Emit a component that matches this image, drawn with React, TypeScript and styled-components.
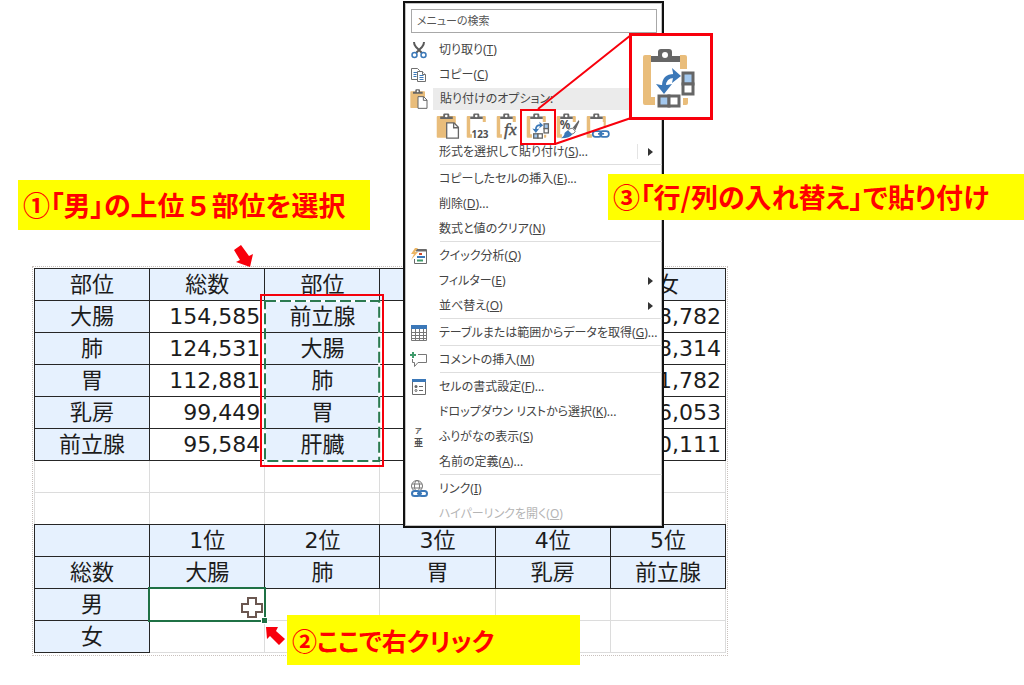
import React from "react";
import styled, { createGlobalStyle, css } from "styled-components";

const GlobalStyle = createGlobalStyle`
  *, *::before, *::after { box-sizing: border-box; }
  body {
    margin: 0;
    background: #ffffff;
    color: #1c1c1c;
    font-family: "Noto Sans", "Noto Sans CJK JP", sans-serif;
  }
`;

const Stage = styled.main`
  position: relative;
  min-height: 100vh;
  padding: 266px 16px 24px 32px;
  overflow: hidden;
`;

/* ---------- worksheet ---------- */

const Sheet = styled.section`
  max-width: 696px;
  padding: 1px 1px 2px;
  border: 1px dotted #c9c1bd;
`;

const Grid = styled.table`
  width: 100%;
  table-layout: fixed;
  border-collapse: collapse;
  font-family: "DejaVu Sans", "Noto Sans CJK JP", sans-serif;
  font-size: 22px;
  line-height: 31px;
`;

type Kind = "label" | "value" | "blank";

/* A 1px double border paints as solid and wins over the pale gridlines it meets. */
const Cell = styled.td<{ $kind: Kind }>`
  position: relative;
  height: 32px;
  padding: 0 4px;
  text-align: center;
  font-weight: 400;
  white-space: nowrap;
  border: 1px solid #dcdcdc;
  ${(p) => p.$kind !== "blank" && css`border: 1px double #262626;`}
  ${(p) => p.$kind === "label" && css`background: #e6f1fe;`}
  ${(p) => p.$kind === "value" && css`text-align: right;`}
`;

const CopiedRange = styled.div`
  position: absolute;
  z-index: 1;
  top: -7px;
  left: -5px;
  width: calc(100% + 10px);
  height: 173px;
  border: 2px solid #f5000c;
  pointer-events: none;

  svg {
    position: absolute;
    top: 4px;
    left: 2px;
    width: calc(100% - 4px);
    height: calc(100% - 6px);
    overflow: visible;
  }
  rect {
    width: calc(100% - 2px);
    height: calc(100% - 3px);
    fill: none;
    stroke-width: 2px;
  }
`;

const ActiveCell = styled.div`
  position: absolute;
  z-index: 1;
  inset: -2px;
  border: 2px solid #1f7145;

  &::after {
    content: "";
    position: absolute;
    right: -3px;
    bottom: -3px;
    width: 5px;
    height: 5px;
    background: #1f7145;
    outline: 1px solid #ffffff;
  }

  svg {
    position: absolute;
    right: 0;
    top: 6px;
  }
`;

/* ---------- context menu ---------- */

const Menu = styled.nav`
  position: absolute;
  z-index: 2;
  top: 1px;
  left: 403px;
  width: 261px;
  display: flex;
  flex-direction: column;
  background: #ffffff;
  border: 2px solid #111111;
  box-shadow: inset 0 0 0 1px #c4c4c4;
  font-size: 12px;
  font-feature-settings: "palt";
  color: #444444;
`;

const Search = styled.input`
  height: 24px;
  margin: 6px 5px 4px 6px;
  padding: 0 5px 2px;
  border: 1px solid #a8a8a8;
  background: #ffffff;
  font: inherit;
  font-size: 11px;
  font-feature-settings: inherit;
  color: #555555;
  &::placeholder { color: #555555; opacity: 1; }
`;

const Row = styled.button`
  display: grid;
  grid-template-columns: 26px 1fr 24px;
  align-items: center;
  height: 25px;
  padding: 0 0 0 4px;
  border: 0;
  background: none;
  font: inherit;
  font-feature-settings: inherit;
  color: inherit;
  text-align: left;
  white-space: nowrap;

  &:disabled { color: #b5b5b5; }
  > svg { width: 20px; height: 20px; }
`;

const RowLabel = styled.span<{ $split?: boolean }>`
  grid-column: 2;
  padding-left: 4px;
  line-height: 21px;
  ${(p) => p.$split && css`border-right: 1px solid #e4e4e4; line-height: 15px;`}
`;

const Heading = styled.div`
  display: grid;
  grid-template-columns: 24px 1fr;
  align-items: center;
  height: 25px;
  padding: 0 3px 2px 4px;
  > svg { width: 20px; height: 20px; }
`;

const HeadingLabel = styled.h2`
  margin: 0;
  padding-left: 7px;
  background: #ebebeb;
  font-size: 12px;
  font-weight: 400;
  line-height: 22px;
`;

const SubmenuMark = styled.span`
  justify-self: center;
  border: 4px solid transparent;
  border-left: 5px solid #333333;
  border-right: 0;
`;

const Rule = styled.hr`
  width: 222px;
  height: 2px;
  margin: 0 0 0 auto;
  border: 0;
  border-top: 1px solid #dedede;
`;

const PasteOptions = styled.div`
  display: flex;
  gap: 6px;
  height: 27px;
  padding-left: 31px;
  align-items: center;
`;

const PasteButton = styled.button`
  width: 24px;
  height: 26px;
  padding: 0;
  border: 0;
  background: none;
  svg { display: block; width: 24px; height: 26px; }
`;

/* ---------- annotations ---------- */

const Callout = styled.p<{ $x: number; $y: number; $w?: number; $h: number; $compact?: boolean }>`
  position: absolute;
  z-index: 4;
  left: ${(p) => p.$x}px;
  top: ${(p) => p.$y}px;
  ${(p) => (p.$w ? `width: ${p.$w}px;` : "right: 0;")}
  margin: 0;
  padding-left: 5px;
  background: #ffff00;
  color: #ff0000;
  font-family: "Noto Sans CJK JP", sans-serif;
  font-size: ${(p) => (p.$compact ? 25 : 27)}px;
  font-weight: 700;
  line-height: ${(p) => p.$h}px;
  font-feature-settings: "palt";
  white-space: nowrap;
`;

const FullWidth = styled.span`
  font-feature-settings: normal;
`;

const Marks = styled.svg`
  position: absolute;
  z-index: 3;
  top: 0;
  left: 0;
  pointer-events: none;
`;

const Magnifier = styled.figure`
  position: absolute;
  z-index: 4;
  top: 33px;
  left: 629px;
  width: 84px;
  height: 87px;
  margin: 0;
  padding: 12px 0 0 10px;
  border: 3px solid #f8000c;
  background: #ffffff;
  svg { display: block; width: 54px; height: 60px; }
`;

/* ---------- drawings ---------- */

const ORANGE = "#e9bd7b";
const GREY = "#666666";
const BLUE = "#3b78b8";

const Drawing = styled.svg`
  overflow: visible;
`;

const Clip = () => (
  <>
    <path d="M9 14V8h7V4q0-3 3-3h8q3 0 3 3v4h8v6z" fill={GREY} />
    <circle cx="23" cy="7" r="3" fill="#fff" />
  </>
);

const PasteFrame = ({ children, filled }: { children?: React.ReactNode; filled?: boolean }) => (
  <Drawing viewBox="0 0 54 60" aria-hidden="true">
    {filled ? (
      <path d="M1 9q0-2 2-2h40q2 0 2 2v48H3q-2 0-2-2z" fill={ORANGE} />
    ) : (
      <path d="M9 7H3Q1 7 1 9v46q0 2 2 2h10v-8H9zM38 7h5q2 0 2 2v12h-7z" fill={ORANGE} />
    )}
    <Clip />
    {children}
  </Drawing>
);

const PasteAll = () => (
  <PasteFrame filled>
    <path d="M24 23h17l10 10v25H24z" fill="#fff" stroke={GREY} strokeWidth="3" />
    <path d="M40 23v11h11" fill="none" stroke={GREY} strokeWidth="3" />
  </PasteFrame>
);

const PasteValues = () => (
  <PasteFrame>
    <text x="12" y="57" fontSize="23" fontWeight="700" fill="#505050" fontFamily="Noto Sans">123</text>
  </PasteFrame>
);

const PasteFormula = () => (
  <PasteFrame>
    <text x="18" y="50" fontSize="40" fontStyle="italic" fill="#505050" stroke="#505050" fontFamily="Liberation Serif">fx</text>
  </PasteFrame>
);

const PasteTranspose = () => (
  <PasteFrame>
    <path d="M41 50h5v5q0 2-2 2h-3z" fill={ORANGE} />
    <path d="M22 38q0-10 10-10" fill="none" stroke={BLUE} strokeWidth="4" />
    <path d="M14 36l8 10 8-10-5 1h-6zM30 20l9 8-9 7 1-5v-5z" fill={BLUE} />
    <g stroke={GREY} strokeWidth="3" fill="#fff">
      <rect x="41" y="25" width="10" height="11" fill="#a3c8ee" />
      <rect x="41" y="36" width="10" height="10" />
      <rect x="17" y="48" width="10" height="10" fill="#a3c8ee" />
      <rect x="27" y="48" width="10" height="10" />
    </g>
  </PasteFrame>
);

const PasteFormat = () => (
  <PasteFrame>
    <text x="8" y="38" fontSize="27" fontWeight="700" fill="#505050" fontFamily="Noto Sans">%</text>
    <path d="M52 16L38 34l6 6 9-20z" fill={GREY} />
    <path d="M37 35l7 7q-3 7-9 7l-9-8q5-6 11-6z" fill="#fff" stroke={GREY} strokeWidth="2" />
    <path d="M28 41l9 8q-5 9-26 9 8-5 8-12 4-5 9-5z" fill={BLUE} />
  </PasteFrame>
);

const PasteLink = () => (
  <PasteFrame>
    <path d="M40 20h5v14h-5z" fill={ORANGE} />
    <g fill="none" stroke={BLUE} strokeWidth="4">
      <rect x="15" y="42" width="20" height="13" rx="6" />
      <rect x="32" y="42" width="20" height="13" rx="6" />
      <path d="M27 48h14" />
    </g>
  </PasteFrame>
);

const CutIcon = () => (
  <svg viewBox="0 0 20 20" fill="none" aria-hidden="true">
    <path d="M5 2q0 3 2 5l6 6M15 2q0 3-2 5l-6 6" stroke="#5a5a5a" strokeWidth="2" />
    <circle cx="5.500" cy="15" r="2.500" stroke={BLUE} strokeWidth="1.500" />
    <circle cx="14.500" cy="15" r="2.500" stroke={BLUE} strokeWidth="1.500" />
  </svg>
);

const CopyIcon = () => (
  <svg viewBox="0 0 20 20" fill="#fff" stroke="#707070" aria-hidden="true">
    <path d="M2.500 3.500h6l2 2v9h-8z" />
    <path d="M4.500 7.500h4M4.500 9.500h3M4.500 11.500h3" stroke={BLUE} />
    <path d="M8.500 6.500h5l3 3v7h-8z" />
    <path d="M13.500 6.500v3h3" />
    <path d="M10.500 10.500h4M10.500 12.500h4M10.500 14.500h4" stroke={BLUE} />
  </svg>
);

const QuickIcon = () => (
  <svg viewBox="0 0 20 20" fill="none" aria-hidden="true">
    <path d="M6.500 5V3.500h11v14h-12V13" fill="#fff" stroke="#6a6a6a" />
    <path d="M7 4.500h10" stroke="#6a6a6a" strokeWidth="2" />
    <path d="M10 8h3" stroke="#d2492a" strokeWidth="2" />
    <path d="M8 11h8" stroke={BLUE} strokeWidth="2" />
    <path d="M8 14.500h6" stroke="#3f9a6b" strokeWidth="2" />
    <path d="M6 2L2 8h3l-3 6 7-8H6l3-4z" fill="#ecb767" />
  </svg>
);

const TableIcon = () => (
  <svg viewBox="0 0 20 20" fill="#fff" aria-hidden="true">
    <path d="M2.500 2.500h15v15h-15z" stroke="#777" />
    <path d="M2 2h16v4H2z" fill={BLUE} />
    <path d="M2 9.500h16M2 12.500h16M2 15.500h16M6.500 6v12M10.500 6v12M14.500 6v12" stroke="#777" />
  </svg>
);

const CommentIcon = () => (
  <svg viewBox="0 0 20 20" fill="none" aria-hidden="true">
    <path d="M9 4.500h8.500v8H9l-3.500 4v-4h-2V9" stroke="#777" />
    <path d="M4 2v6M1 5h6" stroke="#3f9a6b" strokeWidth="2" />
  </svg>
);

const FormatIcon = () => (
  <svg viewBox="0 0 20 20" fill="#fff" aria-hidden="true">
    <path d="M3.500 2.500h13v15h-13z" stroke="#6a6a6a" />
    <path d="M3 2h14v3H3z" fill={BLUE} />
    <path d="M10 9.500h4M10 13.500h4" stroke="#666" />
    <circle cx="7" cy="9.500" r="1.500" fill="#666" />
    <circle cx="7" cy="13.500" r="1" stroke="#666" />
  </svg>
);

const RubyIcon = () => (
  <Drawing viewBox="0 0 20 20" fill="#505050" fontFamily="Noto Sans CJK JP" aria-hidden="true">
    <text x="6" y="6" fontSize="7" fontWeight="700">ア</text>
    <text x="5" y="19" fontSize="9" fontWeight="700">亜</text>
  </Drawing>
);

const LinkIcon = () => (
  <svg viewBox="0 0 20 20" fill="none" aria-hidden="true">
    <g stroke="#777">
      <circle cx="8" cy="7" r="5.500" />
      <ellipse cx="8" cy="7" rx="2.500" ry="5.500" />
      <path d="M3 5h10M3 9h10" />
    </g>
    <path d="M3 11h15v7H3z" fill="#fff" />
    <g stroke={BLUE} strokeWidth="2">
      <rect x="3" y="12" width="8" height="5" rx="2.500" />
      <rect x="10" y="12" width="8" height="5" rx="2.500" />
      <path d="M8 14.500h5" />
    </g>
  </svg>
);

/* ---------- data ---------- */

type CellData = [Kind, string?];

const L = (t = ""): CellData => ["label", t];
const V = (t = ""): CellData => ["value", t];
const blank: CellData = ["blank"];

const rows: CellData[][] = [
  [L("部位"), L("総数"), L("部位"), L(), L(), L("女")],
  [L("大腸"), V("154,585"), L("前立腺"), V(), L(), V("8,782")],
  [L("肺"), V("124,531"), L("大腸"), V(), L(), V("8,314")],
  [L("胃"), V("112,881"), L("肺"), V(), L(), V("1,782")],
  [L("乳房"), V("99,449"), L("胃"), V(), L(), V("6,053")],
  [L("前立腺"), V("95,584"), L("肝臓"), V(), L(), V("0,111")],
  [blank, blank, blank, blank, blank, blank],
  [blank, blank, blank, blank, blank, blank],
  [L(), L("1位"), L("2位"), L("3位"), L("4位"), L("5位")],
  [L("総数"), L("大腸"), L("肺"), L("胃"), L("乳房"), L("前立腺")],
  [L("男"), blank, blank, blank, blank, blank],
  [L("女"), blank, blank, blank, blank, blank],
];

type Item = {
  text: string;
  hotkey: string;
  more?: boolean;
  icon?: React.ReactNode;
  submenu?: boolean;
  split?: boolean;
  disabled?: boolean;
};

const editing: Item[] = [
  { text: "切り取り", hotkey: "T", icon: <CutIcon /> },
  { text: "コピー", hotkey: "C", icon: <CopyIcon /> },
];

const groups: Item[][] = [
  [{ text: "形式を選択して貼り付け", hotkey: "S", more: true, submenu: true, split: true }],
  [
    { text: "コピーしたセルの挿入", hotkey: "E", more: true },
    { text: "削除", hotkey: "D", more: true },
    { text: "数式と値のクリア", hotkey: "N" },
  ],
  [
    { text: "クイック分析", hotkey: "Q", icon: <QuickIcon /> },
    { text: "フィルター", hotkey: "E", submenu: true },
    { text: "並べ替え", hotkey: "O", submenu: true },
  ],
  [{ text: "テーブルまたは範囲からデータを取得", hotkey: "G", more: true, icon: <TableIcon /> }],
  [{ text: "コメントの挿入", hotkey: "M", icon: <CommentIcon /> }],
  [
    { text: "セルの書式設定", hotkey: "F", more: true, icon: <FormatIcon /> },
    { text: "ドロップダウン リストから選択", hotkey: "K", more: true },
    { text: "ふりがなの表示", hotkey: "S", icon: <RubyIcon /> },
    { text: "名前の定義", hotkey: "A", more: true },
  ],
  [
    { text: "リンク", hotkey: "I", icon: <LinkIcon /> },
    { text: "ハイパーリンクを開く", hotkey: "O", disabled: true },
  ],
];

const pasteOptions = [
  { name: "貼り付け", icon: <PasteAll /> },
  { name: "値", icon: <PasteValues /> },
  { name: "数式", icon: <PasteFormula /> },
  { name: "行/列の入れ替え", icon: <PasteTranspose /> },
  { name: "書式設定", icon: <PasteFormat /> },
  { name: "リンク貼り付け", icon: <PasteLink /> },
];

const MenuItem = ({ item }: { item: Item }) => (
  <Row type="button" disabled={item.disabled}>
    {item.icon}
    <RowLabel $split={item.split}>
      {item.text}(<u>{item.hotkey}</u>){item.more && "..."}
    </RowLabel>
    {item.submenu && <SubmenuMark />}
  </Row>
);

export default function App() {
  return (
    <>
      <GlobalStyle />
      <Stage>
        <Sheet>
          <Grid>
            <tbody>
              {rows.map((row, r) => (
                <tr key={r}>
                  {row.map(([kind, text], c) => (
                    <Cell key={c} $kind={kind}>
                      {text}
                      {r === 1 && c === 2 && (
                        <CopiedRange>
                          <svg aria-hidden="true">
                            <rect x="1" y="1" stroke="#ffffff" />
                            <rect x="1" y="1" stroke="#2b7a50" strokeDasharray="11 4" />
                          </svg>
                        </CopiedRange>
                      )}
                      {r === 10 && c === 1 && (
                        <ActiveCell>
                          <svg width="24" height="24" aria-hidden="true">
                            <path d="M8 3h8v6h6v8h-6v5H8v-5H2V9h6z" fill="#fff" stroke="#6b5750" strokeWidth="2" />
                          </svg>
                        </ActiveCell>
                      )}
                    </Cell>
                  ))}
                </tr>
              ))}
            </tbody>
          </Grid>
        </Sheet>

        <Menu aria-label="コンテキスト メニュー">
          <Search type="text" placeholder="メニューの検索" aria-label="メニューの検索" />
          {editing.map((item) => (
            <MenuItem key={item.text} item={item} />
          ))}
          <Heading>
            <PasteAll />
            <HeadingLabel>貼り付けのオプション:</HeadingLabel>
          </Heading>
          <PasteOptions>
            {pasteOptions.map((o) => (
              <PasteButton key={o.name} type="button" aria-label={o.name}>
                {o.icon}
              </PasteButton>
            ))}
          </PasteOptions>
          {groups.map((group, g) => (
            <React.Fragment key={g}>
              {g > 0 && <Rule />}
              {group.map((item) => (
                <MenuItem key={item.text} item={item} />
              ))}
            </React.Fragment>
          ))}
        </Menu>

        <Marks width="760" height="660" aria-hidden="true">
          <g fill="none" stroke="#f8000c" strokeWidth="2">
            <rect x="521" y="110" width="34" height="34" />
            <path d="M538 109L631 35M555 144L631 118" />
          </g>
          <path d="M234 250l7-5 8 11 4-2-3 13-14-5 4-2z" fill="#f8000c" />
          <path d="M266 627l12 0-2 4 9 8-6 6-9-9-3 3z" fill="#f8000c" />
        </Marks>

        <Magnifier>
          <PasteTranspose />
        </Magnifier>

        <Callout $x={18} $y={180} $w={352} $h={50}>
          ①「男」の上位<FullWidth>５</FullWidth>部位を選択
        </Callout>
        <Callout $x={287} $y={615} $w={293} $h={50} $compact>②ここで右クリック</Callout>
        <Callout $x={608} $y={174} $h={46}>③「行/列の入れ替え」で貼り付け</Callout>
      </Stage>
    </>
  );
}
